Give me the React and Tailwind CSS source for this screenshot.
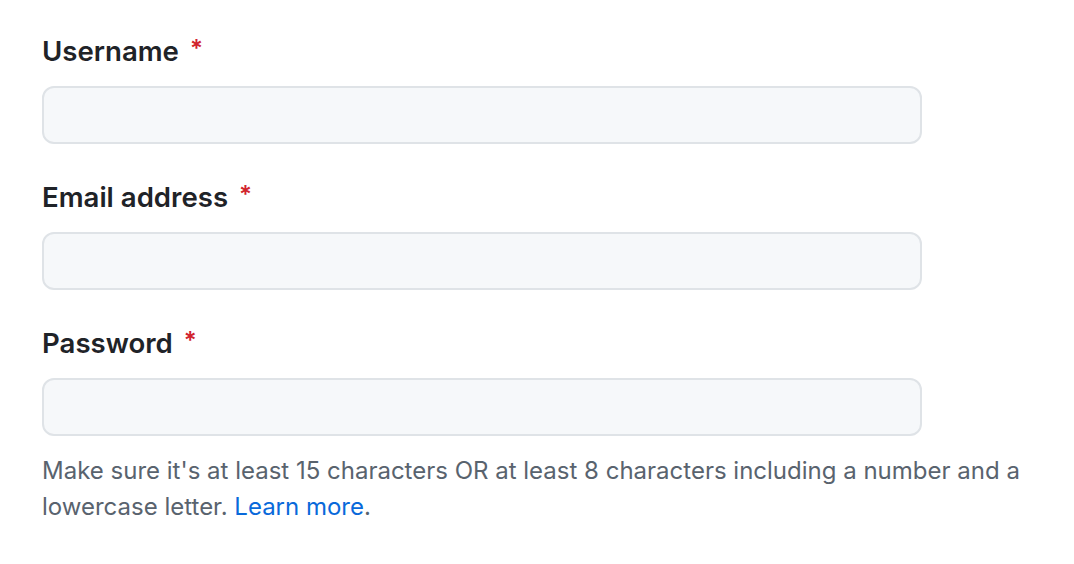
export default function App() {
  const Field = ({ label }) => (
    <div className="flex flex-col">
      <label className="h-[42px] flex items-center text-[27.6px] font-semibold text-[#1f2328] leading-[42px]">
        {label}
        <span className="ml-[11px] text-[#d1242f] text-[24px] relative -top-[2px]">*</span>
      </label>
      <div className="mt-[14px] w-[880px] h-[58px] rounded-[12px] border-2 border-[#dfe3e7] bg-[#f6f8fa]" />
    </div>
  );
  return (
    <div className="w-[1074px] h-[564px] bg-white pl-[42px] pt-[30px]" style={{ fontFamily: "Inter, 'Liberation Sans', sans-serif" }}>
      <div className="flex flex-col gap-[32px]">
        <Field label="Username" />
        <Field label="Email address" />
        <Field label="Password" />
      </div>
      <p className="mt-[17px] w-[1000px] text-[24px] leading-[36px] text-[#59636e]">
        Make sure it's at least 15 characters OR at least 8 characters including a number and a lowercase letter. <span className="text-[#0969da]">Learn more</span>.
      </p>
    </div>
  );
}
